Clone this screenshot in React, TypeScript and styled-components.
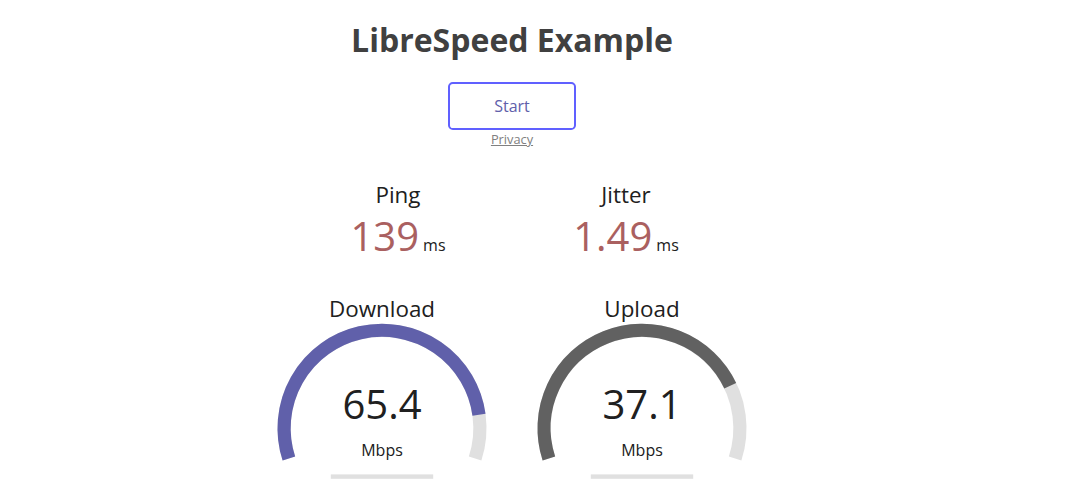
import React from 'react';
import styled, { createGlobalStyle } from 'styled-components';

const GlobalStyle = createGlobalStyle`
  html, body {
    margin: 0;
    padding: 0;
    border: none;
    background: #ffffff;
    color: #202020;
  }
  body {
    font-family: "Open Sans", "Noto Sans", sans-serif;
    font-size: 16px;
    text-align: center;
  }
`;

const meterBk = '#E0E0E0';

const Page = styled.div`
  width: 1024px;
  display: flex;
  flex-direction: column;
  align-items: center;
`;

const Title = styled.h1`
  margin: 20px 0 22px;
  font-size: 32px;
  line-height: 40px;
  font-weight: 700;
  color: #404040;
`;

const StartButton = styled.div`
  width: 128px;
  height: 48px;
  box-sizing: border-box;
  border: 2.4px solid #6060ff;
  border-radius: 4.8px;
  color: #6060aa;
  line-height: 44px;
  font-size: 16px;
  cursor: pointer;
`;

const PrivacyLink = styled.a`
  font-size: 12.8px;
  line-height: 19px;
  color: #808080;
  text-decoration: underline;
`;

const Test = styled.div`
  margin-top: 31px;
  display: flex;
  flex-direction: column;
  align-items: center;
`;

const TestGroup = styled.div`
  display: flex;
  gap: 4px;
  justify-content: center;
`;

const SmallArea = styled.div`
  width: 224px;
  height: 112px;
  display: flex;
  flex-direction: column;
  align-items: center;
`;

const TestName = styled.div`
  font-size: 22.4px;
  line-height: 30px;
`;

const ValueLine = styled.div`
  display: flex;
  align-items: baseline;
  justify-content: center;
  gap: 4px;
`;

const MeterText = styled.div<{ $color?: string }>`
  font-size: 40px;
  line-height: 52px;
  color: ${(p) => p.$color ?? '#202020'};
`;

const Unit = styled.div`
  font-size: 16px;
`;

const GaugeArea = styled.div`
  width: 256px;
  height: 200px;
  position: relative;
`;

const GaugeName = styled(TestName)`
  position: absolute;
  top: 2px;
  left: 0;
  width: 100%;
  z-index: 2;
`;

const GaugeValue = styled(MeterText)`
  position: absolute;
  bottom: 62px;
  left: 0;
  width: 100%;
  z-index: 2;
`;

const GaugeUnit = styled(Unit)`
  position: absolute;
  bottom: 31px;
  left: 0;
  width: 100%;
  z-index: 2;
`;

const GaugeSvg = styled.svg`
  position: absolute;
  top: 0;
  left: 0;
  width: 100%;
  height: 100%;
`;

const W = 256;
const H = 200;
const s = H * 0.0055;
const lw = 12 * s;
const cx = W / 2;
const cy = H - 58 * s;
const r = H / 1.8 - lw;

const pt = (a: number) => [cx + r * Math.cos(a), cy + r * Math.sin(a)];

const arcPath = (a0: number, a1: number) => {
  const [x0, y0] = pt(a0);
  const [x1, y1] = pt(a1);
  const large = a1 - a0 > Math.PI ? 1 : 0;
  return `M ${x0} ${y0} A ${r} ${r} 0 ${large} 1 ${x1} ${y1}`;
};

const mbpsToAmount = (v: number) => 1 - 1 / Math.pow(1.3, Math.sqrt(v));

const Gauge: React.FC<{ name: string; value: string; color: string }> = ({
  name,
  value,
  color,
}) => {
  const amount = mbpsToAmount(parseFloat(value));
  const start = -Math.PI * 1.1;
  return (
    <GaugeArea>
      <GaugeName>{name}</GaugeName>
      <GaugeSvg viewBox={`0 0 ${W} ${H}`}>
        <path d={arcPath(start, Math.PI * 0.1)} stroke={meterBk} strokeWidth={lw} fill="none" />
        <path
          d={arcPath(start, amount * Math.PI * 1.2 + start)}
          stroke={color}
          strokeWidth={lw}
          fill="none"
        />
        <rect x={W * 0.3} y={H - 16 * s} width={W * 0.4} height={4 * s} fill={meterBk} />
      </GaugeSvg>
      <GaugeValue>{value}</GaugeValue>
      <GaugeUnit>Mbps</GaugeUnit>
    </GaugeArea>
  );
};

export default function App() {
  return (
    <Page>
      <GlobalStyle />
      <Title>LibreSpeed Example</Title>
      <StartButton>Start</StartButton>
      <PrivacyLink href="#">Privacy</PrivacyLink>
      <Test>
        <TestGroup>
          <SmallArea>
            <TestName>Ping</TestName>
            <ValueLine>
              <MeterText $color="#AA6060">139</MeterText>
              <Unit>ms</Unit>
            </ValueLine>
          </SmallArea>
          <SmallArea>
            <TestName>Jitter</TestName>
            <ValueLine>
              <MeterText $color="#AA6060">1.49</MeterText>
              <Unit>ms</Unit>
            </ValueLine>
          </SmallArea>
        </TestGroup>
        <TestGroup>
          <Gauge name="Download" value="65.4" color="#6060AA" />
          <Gauge name="Upload" value="37.1" color="#616161" />
        </TestGroup>
      </Test>
    </Page>
  );
}
